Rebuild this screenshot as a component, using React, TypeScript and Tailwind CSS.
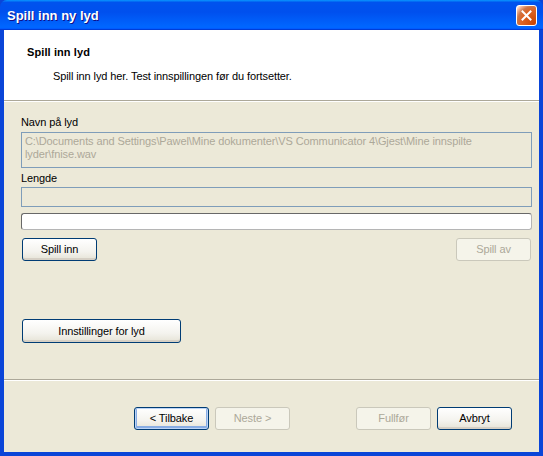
import React from 'react';

const font = { fontFamily: '"Liberation Sans", Arial, sans-serif' };

function XpButton({
  children,
  disabled,
  focused,
  className = '',
}: {
  children: React.ReactNode;
  disabled?: boolean;
  focused?: boolean;
  className?: string;
}) {
  if (disabled) {
    return (
      <div
        className={`flex items-center justify-center h-[23px] w-[75px] rounded-[3px] border border-[#cac8bb] bg-[#f5f4ea] text-[11px] text-[#aca899] ${className}`}
      >
        {children}
      </div>
    );
  }
  return (
    <div
      className={`flex items-center justify-center h-[23px] w-[75px] rounded-[3px] border border-[#003c74] bg-[linear-gradient(180deg,#ffffff_0%,#f4f3ee_60%,#e6e3d6_100%)] text-[11px] text-black ${
        focused ? 'shadow-[inset_0_0_0_1px_#bcd4f6,inset_0_-1px_0_2px_#89ade4]' : 'shadow-[inset_0_-2px_0_0_#d6d0c5]'
      } ${className}`}
    >
      {children}
    </div>
  );
}

export default function App() {
  return (
    <div className="w-[543px] h-[456px] flex flex-col bg-[#0a45d8] overflow-hidden tracking-[-0.1px]" style={font}>
      {/* Title bar */}
      <div className="h-[30px] shrink-0 flex items-center justify-between pl-[7px] pr-[6px] rounded-t-[7px] bg-[linear-gradient(180deg,#0997ff,#0053ee_8%,#0050ee_40%,#0066ff_88%,#0066ff_93%,#005bff_95%,#003dd7_96%,#003dd7)]">
        <span className="text-white font-bold text-[13px] tracking-[0px] [text-shadow:1px_1px_#0f1089] pt-[1px]">
          Spill inn ny lyd
        </span>
        <div className="w-[21px] h-[21px] rounded-[3px] border border-white flex items-center justify-center bg-[radial-gradient(circle_at_90%_90%,#cc4600_0,#dc6527_55%,#cd7546_70%,#ffccb2_90%,#ffffff_100%)]">
          <svg width="11" height="11" viewBox="0 0 11 11">
            <path d="M1.5 1.5 L9.5 9.5 M9.5 1.5 L1.5 9.5" stroke="white" strokeWidth="2" strokeLinecap="square" />
          </svg>
        </div>
      </div>

      {/* Client area with frame */}
      <div className="flex-1 flex flex-col mx-[4px] mb-[4px] bg-[#ece9d8]">
        {/* Header */}
        <div className="h-[71px] shrink-0 bg-white border-b border-[#aca899] flex flex-col">
          <div className="pl-[23px] pt-[16px] font-bold text-[11px] text-black leading-[13px] tracking-[0.1px]">Spill inn lyd</div>
          <div className="pl-[49px] pt-[11px] text-[11px] text-black leading-[13px]">
            Spill inn lyd her. Test innspillingen før du fortsetter.
          </div>
        </div>
        <div className="h-px bg-white shrink-0" />

        {/* Body */}
        <div className="flex-1 flex flex-col pl-[17px] pr-[7px] pt-[14px] text-[11px] leading-[13px]">
          <div className="text-black">Navn på lyd</div>
          <div className="mt-[3px] h-[36px] border border-[#7f9db9] px-[3px] pt-[2px] text-[#aca899]">
            C:\Documents and Settings\Pawel\Mine dokumenter\VS Communicator 4\Gjest\Mine innspilte
            <br />
            lyder\fnise.wav
          </div>
          <div className="mt-[4px] text-black">Lengde</div>
          <div className="mt-[2px] h-[20px] border border-[#7f9db9]" />
          <div className="mt-[6px] h-[17px] rounded-[3px] border border-[#686868] border-r-[#b5b5b5] border-b-[#b5b5b5] bg-white" />
          <div className="mt-[8px] flex justify-between pl-[1px] pr-[1px]">
            <XpButton>Spill inn</XpButton>
            <XpButton disabled className="w-[73px]">Spill av</XpButton>
          </div>
          <div className="mt-[58px] pl-[1px]">
            <XpButton className="w-[159px] h-[24px]">Innstillinger for lyd</XpButton>
          </div>
        </div>

        {/* Separator + buttons */}
        <div className="shrink-0 border-t border-[#aca899]">
          <div className="h-px bg-white" />
          <div className="h-[71px] flex items-start pt-[26px] pl-[130px]">
            <XpButton focused>&lt; Tilbake</XpButton>
            <XpButton disabled className="ml-[6px]">Neste &gt;</XpButton>
            <XpButton disabled className="ml-[66px]">Fullfør</XpButton>
            <XpButton className="ml-[6px]">Avbryt</XpButton>
          </div>
        </div>
      </div>
    </div>
  );
}
